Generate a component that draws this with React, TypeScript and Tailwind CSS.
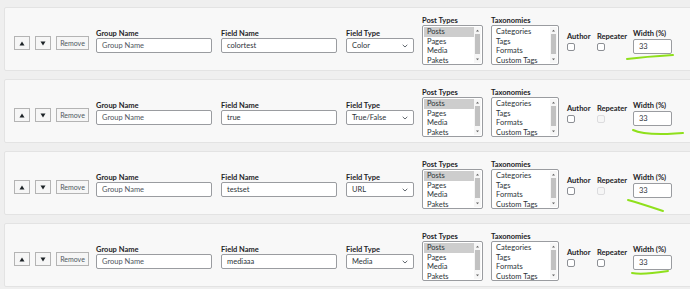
import React from "react";

const font = { fontFamily: 'Lato, "Noto Sans", sans-serif' };

type Row = { field: string; type: string; repDisabled: boolean; scribble: string };

const rows: Row[] = [
  { field: "colortest", type: "Color", repDisabled: false, scribble: "M622 51 C 638 49, 652 48, 668 47" },
  { field: "true", type: "True/False", repDisabled: true, scribble: "M628 50 C 634 53, 640 54, 656 54 C 666 54, 672 53, 678 53" },
  { field: "testset", type: "URL", repDisabled: true, scribble: "M623 48 C 634 51, 646 55, 658 59" },
  { field: "mediaaa", type: "Media", repDisabled: false, scribble: "M627 49 C 638 51, 650 49, 663 47" },
];

function Label({ children }: { children: React.ReactNode }) {
  return <div className="text-[7.5px] font-bold leading-[9px] text-[#1d2327] whitespace-nowrap">{children}</div>;
}

function TextInput({ value, w, muted }: { value: string; w: string; muted?: boolean }) {
  return (
    <div
      className={`${w} h-[15px] border border-[#9a9ca0] rounded-[2px] bg-white flex items-center pl-[5px] text-[7.5px] ${muted ? "text-[#50575e]" : "text-[#2c3338]"}`}
    >
      {value}
    </div>
  );
}

function ListBox({ items, w }: { items: string[]; w: string }) {
  return (
    <div className={`${w} h-[40px] border border-[#9a9ca0] rounded-[2px] bg-white flex overflow-hidden`}>
      <div className="flex-1 flex flex-col pt-[1px] pl-[1px]">
        {items.map((it, i) => (
          <div
            key={it}
            className={`h-[9.6px] leading-[9.6px] text-[7.5px] pl-[3px] text-[#2c3338] whitespace-nowrap ${i === 0 && items[0] === "Posts" ? "bg-[#cdcdcd]" : ""}`}
          >
            {it}
          </div>
        ))}
      </div>
      <div className="w-[7px] flex flex-col items-center bg-[#f6f6f6] mr-[1px] my-[1px]">
        <svg width="5" height="5" viewBox="0 0 5 5" className="mt-[1px]">
          <path d="M1 3.5 L2.5 1.8 L4 3.5 Z" fill="#606060" />
        </svg>
        <div className="w-[5px] h-[20px] bg-[#c1c1c1] mt-[1px]" />
        <div className="flex-1" />
        <svg width="5" height="5" viewBox="0 0 5 5" className="mb-[1px]">
          <path d="M1 1.5 L2.5 3.2 L4 1.5 Z" fill="#606060" />
        </svg>
      </div>
    </div>
  );
}

function Checkbox({ disabled }: { disabled?: boolean }) {
  return (
    <div
      className={`w-[8px] h-[8px] rounded-[2px] border ${disabled ? "border-[#dcdcde] bg-[#f6f6f6]" : "border-[#8c8f94] bg-white"}`}
    />
  );
}

function SmallBtn({ children, w }: { children: React.ReactNode; w: string }) {
  return (
    <div className={`${w} h-[14px] border border-[#b4b4b4] bg-[#f6f6f6] flex items-center justify-center text-[7px] text-[#50575e]`}>
      {children}
    </div>
  );
}

function Card({ r }: { r: Row }) {
  return (
    <div className="relative ml-[4px] w-[700px] h-[64px] bg-[#f8f8f8] border border-[#e3e3e3] rounded-[2px] flex items-center pl-[9px] pt-[3px]">
      <div className="flex items-center gap-[5px] mt-[5px]">
        <SmallBtn w="w-[16px]">
          <svg width="6" height="5" viewBox="0 0 6 5">
            <path d="M0.5 4.5 L3 0.5 L5.5 4.5 Z" fill="#1d2327" />
          </svg>
        </SmallBtn>
        <SmallBtn w="w-[16px]">
          <svg width="6" height="5" viewBox="0 0 6 5">
            <path d="M0.5 0.5 L3 4.5 L5.5 0.5 Z" fill="#1d2327" />
          </svg>
        </SmallBtn>
        <SmallBtn w="w-[33px]">Remove</SmallBtn>
      </div>
      <div className="ml-[7px] flex flex-col mt-[1px]">
        <Label>Group Name</Label>
        <TextInput value="Group Name" w="w-[116px]" muted />
      </div>
      <div className="ml-[9px] flex flex-col mt-[1px]">
        <Label>Field Name</Label>
        <TextInput value={r.field} w="w-[116px]" />
      </div>
      <div className="ml-[9px] flex flex-col mt-[1px]">
        <Label>Field Type</Label>
        <div className="w-[68px] h-[15px] border border-[#9a9ca0] rounded-[2px] bg-white flex items-center pl-[5px] pr-[5px] text-[7.5px] text-[#2c3338]">
          <span className="flex-1">{r.type}</span>
          <svg width="6" height="4" viewBox="0 0 6 4">
            <path d="M0.7 0.8 L3 3 L5.3 0.8" stroke="#50575e" strokeWidth="0.9" fill="none" />
          </svg>
        </div>
      </div>
      <div className="ml-[8px] flex flex-col">
        <Label>Post Types</Label>
        <ListBox items={["Posts", "Pages", "Media", "Pakets"]} w="w-[61px]" />
      </div>
      <div className="ml-[8px] flex flex-col">
        <Label>Taxonomies</Label>
        <ListBox items={["Categories", "Tags", "Formats", "Custom Tags"]} w="w-[68px]" />
      </div>
      <div className="ml-[8px] w-[30px] flex flex-col gap-[2px] mt-[1px]">
        <Label>Author</Label>
        <Checkbox />
      </div>
      <div className="w-[36px] flex flex-col gap-[2px] mt-[1px]">
        <Label>Repeater</Label>
        <Checkbox disabled={r.repDisabled} />
      </div>
      <div className="flex flex-col gap-[1px] mt-[2px]">
        <Label>Width (%)</Label>
        <TextInput value="33" w="w-[39px]" />
      </div>
      <svg className="absolute left-0 top-0 pointer-events-none" width="700" height="64">
        <path d={r.scribble} stroke="#8fe01c" strokeWidth="2" fill="none" strokeLinecap="round" />
      </svg>
    </div>
  );
}

export default function App() {
  return (
    <div style={font} className="w-[690px] h-[289px] overflow-hidden bg-[#efefef] pt-[7px] flex flex-col gap-[8px]">
      {rows.map((r, i) => (
        <Card key={i} r={r} />
      ))}
    </div>
  );
}
